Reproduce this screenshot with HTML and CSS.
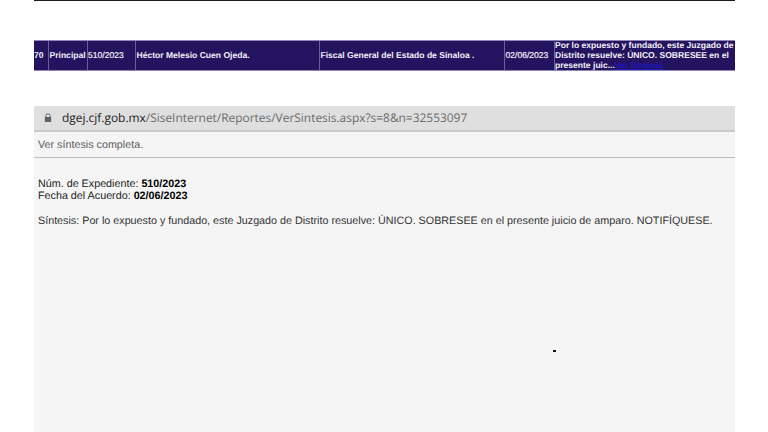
FILE: index.html
```html
<!DOCTYPE html>
<html lang="es">
<head>
<meta charset="utf-8">
<title>Ver síntesis</title>
<link rel="stylesheet" href="styles.css">
</head>
<body>
<div class="page">
  <div class="topline"></div>
  <div class="row">
    <div class="cell c1">70</div>
    <div class="cell c2">Principal</div>
    <div class="cell c3">510/2023</div>
    <div class="cell c4">Héctor Melesio Cuen Ojeda.</div>
    <div class="cell c5">Fiscal General del Estado de Sinaloa .</div>
    <div class="cell c6">02/06/2023</div>
    <div class="cell c7">Por lo expuesto y fundado, este Juzgado de Distrito resuelve: ÚNICO. SOBRESEE en el presente juic...<a class="link">Ver Síntesis</a></div>
  </div>
  <div class="window">
    <div class="addr">
      <svg class="lock" viewBox="0 0 8 10" width="8" height="10" aria-hidden="true"><path d="M1.9 4V2.9a2.1 2.1 0 0 1 4.2 0V4" fill="none" stroke="#5f6368" stroke-width="1"/><rect x="0.8" y="4" width="6.4" height="5" rx="0.6" fill="#5f6368"/></svg>
      <span class="url"><span class="host">dgej.cjf.gob.mx</span>/SiseInternet/Reportes/VerSintesis.aspx?s=8&amp;n=32553097</span>
    </div>
    <div class="head">Ver síntesis completa.</div>
    <div class="content">
      <p class="meta">Núm. de Expediente: <b>510/2023</b><br>Fecha del Acuerdo: <b>02/06/2023</b></p>
      <p class="syn">Síntesis: Por lo expuesto y fundado, este Juzgado de Distrito resuelve: ÚNICO. SOBRESEE en el presente juicio de amparo. NOTIFÍQUESE.</p>
    </div>
    <div class="dot"></div>
  </div>
</div>
</body>
</html>
```
FILE: styles.css
```css
html, body { margin: 0; padding: 0; background: #fff; }
body { width: 768px; height: 432px; overflow: hidden; font-family: "Liberation Sans", Arial, sans-serif; text-rendering: geometricPrecision; }
.page { width: 701px; margin-left: 34px; height: 432px; display: flex; flex-direction: column; }
.topline { height: 1px; background: #1c1c1c; }
.row {
  margin-top: 39px; height: 31px; box-sizing: border-box;
  display: grid; grid-template-columns: 14px 39px 48px 184px 185px 50px 181px;
  background: #24135f; border-top: 1px solid #8f88b5; border-bottom: 1px solid #8f88b5;
  color: #f2f1f8; font-size: 8.55px; font-weight: bold;
}
.cell { display: flex; align-items: center; padding-left: 0.5px; padding-bottom: 2px; border-left: 1px solid #6a6096; min-width: 0; white-space: nowrap; }
.c1 { border-left: 0; padding-left: 0; overflow: hidden; }
.c3 { padding-left: 0; }
.c3, .c6 { font-weight: normal; -webkit-text-stroke: 0.2px #f2f1f8; }
.c7 { display: block; white-space: normal; line-height: 10px; padding: 0; margin-top: -1px; }
.link { color: #1a1ac0; text-decoration: underline; }
.window { position: relative; margin-top: 35px; flex: 1; background: #f5f5f5; display: flex; flex-direction: column; }
.addr { height: 26px; box-sizing: border-box; background: #dfdfdf; border-bottom: 2px solid #cbcbcb; display: flex; align-items: center; padding-left: 10px; gap: 10px; }
.url { font-family: "Open Sans", sans-serif; font-size: 11.93px; color: #6b6b6b; white-space: nowrap; }
.host { color: #222; }
.head { height: 26px; box-sizing: border-box; border-bottom: 1px solid #bdbdbd; padding: 7px 0 0 4px; font-size: 10.75px; line-height: 13px; color: #5c5c5c; }
.content { padding: 20px 0 0 4px; font-size: 10.75px; line-height: 12px; color: #222; }
.content b { color: #000; }
.content p { margin: 0; }
.syn { margin-top: 13px !important; color: #333; }
.dot { position: absolute; left: 519px; top: 244px; width: 3px; height: 2px; background: #111; }
```
